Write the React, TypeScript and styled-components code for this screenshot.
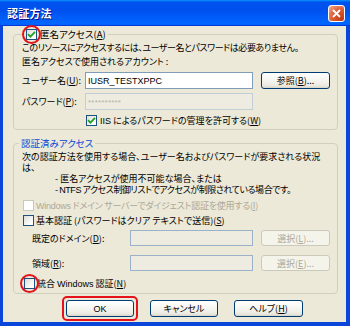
import React from "react";
import styled, { createGlobalStyle } from "styled-components";

const GlobalStyle = createGlobalStyle`
  html, body {
    margin: 0;
    padding: 0;
    width: 350px;
    height: 326px;
    overflow: hidden;
    background: #ffffff;
  }
  body {
    font-family: "Noto Sans CJK JP", "Noto Sans", sans-serif;
    font-size: 9px;
    font-feature-settings: "palt";
    color: #000000;
  }
`;

const Frame = styled.div`
  width: 350px;
  height: 326px;
  display: flex;
  flex-direction: column;
`;

const TitleBar = styled.div`
  height: 26px;
  flex-shrink: 0;
  display: flex;
  align-items: center;
  justify-content: space-between;
  padding: 0 5px 1px 7px;
  box-sizing: border-box;
  background: linear-gradient(180deg, #0997ff, #0053ee 8%, #0050ee 40%, #06f 88%, #06f 93%, #005bff 95%, #003dd7 96%, #003dd7);
`;

const Title = styled.span`
  color: #ffffff;
  font-weight: bold;
  font-size: 11px;
  letter-spacing: 0.2px;
  text-shadow: 1px 1px 0 #0f1089;
`;

const CloseButton = styled.div`
  width: 17px;
  height: 17px;
  box-sizing: border-box;
  border: 1px solid #ffffff;
  border-radius: 3px;
  background: radial-gradient(circle at 85% 85%, #c23a14 0%, #dc5a32 50%, #e88a6c 80%, #f4c0ae 100%);
  display: flex;
  align-items: center;
  justify-content: center;
  margin-top: 1px;
`;

const Client = styled.div`
  flex: 1;
  display: flex;
  flex-direction: column;
  background: #ece9d8;
  border-style: solid;
  border-color: #0a46d9;
  border-width: 0 4px 4px 3px;
`;

const Group = styled.fieldset<{ $top: number; $bottom: number }>`
  margin: ${(p) => p.$top}px 0 0 10px;
  width: 325px;
  box-sizing: border-box;
  padding: 0 0 ${(p) => p.$bottom}px 8px;
  border: 1px solid #d0d0bf;
  border-radius: 4px;
  display: flex;
  flex-direction: column;
  min-width: 0;
`;

const Legend = styled.legend<{ $offset: number }>`
  margin-left: ${(p) => p.$offset - 8}px;
  padding: 0 2px;
  display: flex;
  align-items: center;
  gap: 3px;
  line-height: 14px;
  font-size: 9.5px;
`;

const BlueLegend = styled.legend`
  margin-left: -3px;
  padding: 0 2px;
  color: #0046d5;
  line-height: 12px;
  font-size: 9.5px;
`;

const Line = styled.div<{ $h: number; $indent?: number; $top?: number; $ls?: number }>`
  line-height: ${(p) => p.$h}px;
  height: ${(p) => p.$h}px;
  white-space: nowrap;
  padding-left: ${(p) => p.$indent ?? 0}px;
  margin-top: ${(p) => p.$top ?? 0}px;
  letter-spacing: ${(p) => p.$ls ?? 0}px;
`;

const Row = styled.div<{ $h: number; $top: number; $indent?: number }>`
  display: flex;
  align-items: center;
  height: ${(p) => p.$h}px;
  margin-top: ${(p) => p.$top}px;
  padding-left: ${(p) => p.$indent ?? 0}px;
  white-space: nowrap;
`;

const Label = styled.span<{ $w: number }>`
  width: ${(p) => p.$w}px;
  flex-shrink: 0;
`;

const TextBox = styled.div<{ $w: number; $h: number; $kind?: "normal" | "readonly" | "disabled" }>`
  width: ${(p) => p.$w}px;
  height: ${(p) => p.$h}px;
  box-sizing: border-box;
  border: 1px solid
    ${(p) => (p.$kind === "readonly" ? "#c3cdd8" : p.$kind === "disabled" ? "#9ab2c8" : "#7f9db9")};
  background: ${(p) => (p.$kind && p.$kind !== "normal" ? "#eeece1" : "#ffffff")};
  display: flex;
  align-items: center;
  padding-left: 2px;
  font-family: "Liberation Sans", "Noto Sans", sans-serif;
  font-size: 9px;
  flex-shrink: 0;
`;

const Masked = styled.span`
  color: #b4b2a6;
  letter-spacing: 0.2px;
  font-size: 8px;
  margin-top: 2px;
`;

const Button = styled.button<{ $w: number; $h: number; $off?: boolean }>`
  width: ${(p) => p.$w}px;
  height: ${(p) => p.$h}px;
  margin-left: 8px;
  padding: 0;
  box-sizing: border-box;
  border: 1px solid ${(p) => (p.$off ? "#cbc9bc" : "#003c74")};
  border-radius: 3px;
  background: ${(p) =>
    p.$off ? "#f5f4ea" : "linear-gradient(180deg, #ffffff 0%, #f6f6f2 45%, #ebe9e0 85%, #d8d4c8 100%)"};
  color: ${(p) => (p.$off ? "#aca899" : "#000000")};
  font-family: inherit;
  font-size: 9px;
  font-feature-settings: "palt";
  line-height: 1;
  flex-shrink: 0;
`;

const CheckWrap = styled.span<{ $indent?: number }>`
  position: relative;
  display: inline-flex;
  margin-left: ${(p) => p.$indent ?? 0}px;
  flex-shrink: 0;
`;

const Box = styled.span<{ $off?: boolean }>`
  width: 11px;
  height: 11px;
  box-sizing: border-box;
  border: 1px solid ${(p) => (p.$off ? "#cac8bb" : "#1c5180")};
  background: ${(p) => (p.$off ? "#ffffff" : "linear-gradient(135deg, #dcdcd7 0%, #ffffff 80%)")};
  display: flex;
  align-items: center;
  justify-content: center;
`;

const Ring = styled.span<{ $radius: string }>`
  position: absolute;
  inset: -4px;
  border: 2.5px solid #e5121b;
  border-radius: ${(p) => p.$radius};
  pointer-events: none;
`;

const CheckLabel = styled.span<{ $off?: boolean; $gap: number; $ls?: number }>`
  margin-left: ${(p) => p.$gap}px;
  color: ${(p) => (p.$off ? "#aca899" : "#000000")};
  letter-spacing: ${(p) => p.$ls ?? 0}px;
`;

const Latin = styled.span`
  font-family: "Liberation Sans", "Noto Sans", sans-serif;
  font-size: 9px;
`;

const ButtonBar = styled.div`
  display: flex;
  gap: 16px;
  margin-top: 6px;
  padding-left: 63px;
`;

const ButtonSlot = styled.span`
  position: relative;
  display: inline-flex;
`;

const DialogButton = styled(Button)`
  margin-left: 0;
`;

const Check = () => (
  <svg width="9" height="9" viewBox="0 0 9 9">
    <path d="M1 4.2 L3.4 6.6 L8 1.8" fill="none" stroke="#21a121" strokeWidth="1.8" />
  </svg>
);

const CheckBox = ({
  checked,
  off,
  ring,
  indent,
}: {
  checked?: boolean;
  off?: boolean;
  ring?: boolean;
  indent?: number;
}) => (
  <CheckWrap $indent={indent}>
    <Box $off={off}>{checked && <Check />}</Box>
    {ring && <Ring $radius="50%" />}
  </CheckWrap>
);

const App = () => {
  return (
    <Frame>
      <GlobalStyle />
      <TitleBar>
        <Title>認証方法</Title>
        <CloseButton>
          <svg width="9" height="9" viewBox="0 0 9 9">
            <path d="M1 1 L8 8 M8 1 L1 8" stroke="#ffffff" strokeWidth="1.8" />
          </svg>
        </CloseButton>
      </TitleBar>
      <Client>
        <Group $top={1} $bottom={2}>
          <Legend $offset={10}>
            <CheckBox checked ring />
            <span>
              匿名アクセス(<u>A</u>)
            </span>
          </Legend>
          <Line $h={14} $ls={-0.45}>
            このリソースにアクセスするには、ユーザー名とパスワードは必要ありません。
          </Line>
          <Line $h={14}>匿名アクセスで使用されるアカウント :</Line>
          <Row $h={17} $top={3}>
            <Label $w={63}>
              ユーザー名(<u>U</u>):
            </Label>
            <TextBox $w={168} $h={17}>
              IUSR_TESTXPPC
            </TextBox>
            <Button $w={69} $h={17}>
              参照(<u>B</u>)...
            </Button>
          </Row>
          <Row $h={17} $top={4}>
            <Label $w={63}>
              パスワード(<u>P</u>):
            </Label>
            <TextBox $w={168} $h={17} $kind="readonly">
              <Masked>**********</Masked>
            </TextBox>
          </Row>
          <Row $h={13} $top={4}>
            <CheckBox checked indent={64} />
            <CheckLabel $gap={3}>
              <Latin>IIS</Latin> によるパスワードの管理を許可する(<u>W</u>)
            </CheckLabel>
          </Row>
        </Group>

        <Group $top={7} $bottom={3}>
          <BlueLegend>認証済みアクセス</BlueLegend>
          <Line $h={11} $top={2}>
            次の認証方法を使用する場合、ユーザー名およびパスワードが要求される状況
          </Line>
          <Line $h={11}>は、</Line>
          <Line $h={11} $indent={33}>
            - 匿名アクセスが使用不可能な場合、または
          </Line>
          <Line $h={11} $indent={33} $ls={-0.45}>
            - <Latin>NTFS</Latin> アクセス制御リストでアクセスが制限されている場合です。
          </Line>
          <Row $h={13} $top={4}>
            <CheckBox off indent={1} />
            <CheckLabel $off $gap={2} $ls={-0.25}>
              <Latin>Windows</Latin> ドメイン サーバーでダイジェスト認証を使用する(<u>I</u>)
            </CheckLabel>
          </Row>
          <Row $h={13} $top={2}>
            <CheckBox indent={1} />
            <CheckLabel $gap={2}>基本認証 (パスワードはクリア テキストで送信)(<u>S</u>)</CheckLabel>
          </Row>
          <Row $h={16} $top={3} $indent={10}>
            <Label $w={98}>
              既定のドメイン(<u>D</u>):
            </Label>
            <TextBox $w={123} $h={16} $kind="disabled" />
            <Button $w={69} $h={16} $off>
              選択(<u>L</u>)...
            </Button>
          </Row>
          <Row $h={16} $top={9} $indent={10}>
            <Label $w={98}>
              領域(<u>R</u>):
            </Label>
            <TextBox $w={123} $h={16} $kind="disabled" />
            <Button $w={69} $h={16} $off>
              選択(<u>E</u>)...
            </Button>
          </Row>
          <Row $h={13} $top={6}>
            <CheckBox ring indent={2} />
            <CheckLabel $gap={2}>
              統合 <Latin>Windows</Latin> 認証(<u>N</u>)
            </CheckLabel>
          </Row>
        </Group>

        <ButtonBar>
          <ButtonSlot>
            <DialogButton $w={68} $h={17}>
              <Latin>OK</Latin>
            </DialogButton>
            <Ring $radius="5px" />
          </ButtonSlot>
          <DialogButton $w={68} $h={17}>
            キャンセル
          </DialogButton>
          <DialogButton $w={69} $h={17}>
            ヘルプ(<u>H</u>)
          </DialogButton>
        </ButtonBar>
      </Client>
    </Frame>
  );
};

export default App;
